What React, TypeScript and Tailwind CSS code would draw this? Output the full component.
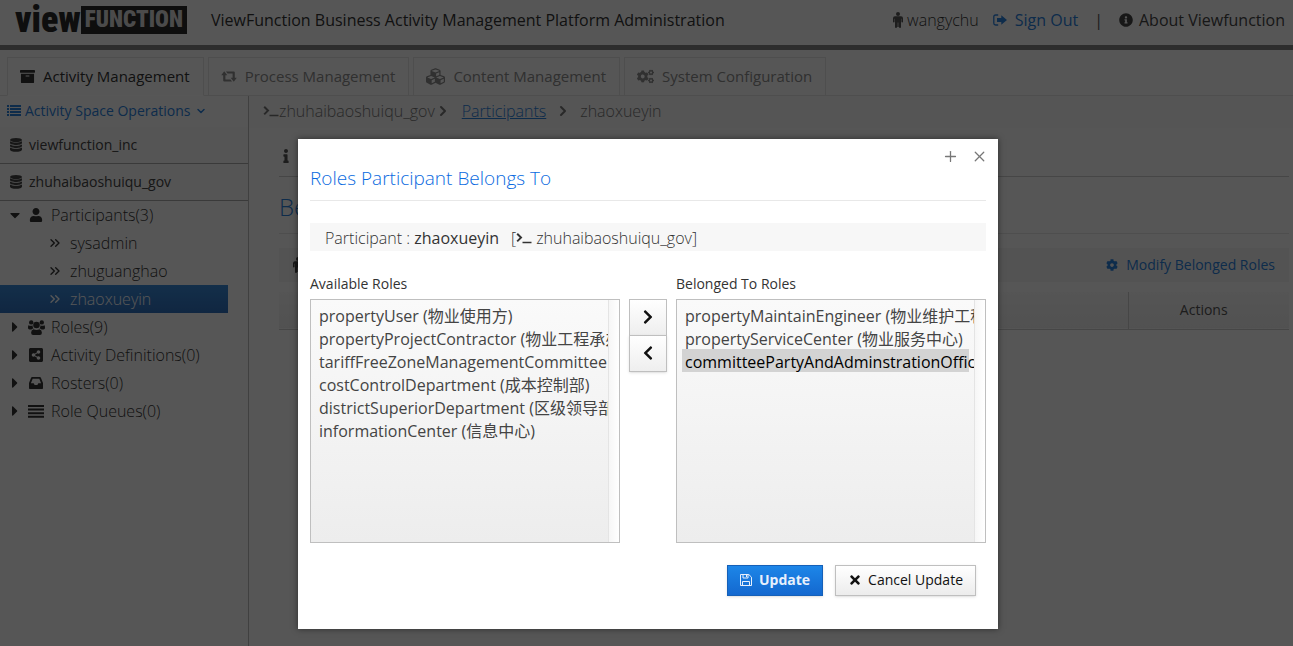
import React from "react";
import {
  FaArchive,
  FaCaretDown,
  FaCaretRight,
  FaChevronLeft,
  FaChevronRight,
  FaCog,
  FaCogs,
  FaCubes,
  FaInfo,
  FaInfoCircle,
  FaShareAltSquare,
  FaTimes,
  FaUser,
} from "react-icons/fa";
import { ChevronDown, ChevronRight, ChevronsRight, Plus, X } from "lucide-react";

type IconProps = { className?: string };

const SignOutIcon = () => (
  <svg viewBox="0 0 14 12" className="h-3 w-3.5" fill="none" aria-hidden="true">
    <path d="M5.2 1H2.6Q.8 1 .8 2.8v6.4Q.8 11 2.6 11h2.6" stroke="currentColor" strokeWidth="1.3" />
    <path d="M8.3 1.2 14 6l-5.700 4.800V8H4V4h4.300z" fill="currentColor" />
  </svg>
);

const FloppyIcon = () => (
  <svg viewBox="0 0 12 12" className="size-3" fill="none" stroke="currentColor" aria-hidden="true">
    <path d="M.5 .5h8.300l2.700 2.700v8.300H.5z" />
    <path d="M2.500 11.500V7.500h7v4M3 .5v3.500h5V.5M6.500 1v2" />
  </svg>
);

const PromptIcon = ({ className = "" }: IconProps) => (
  <svg viewBox="0 0 16 12" className={`h-3 w-4 shrink-0 ${className}`} fill="none" stroke="currentColor" strokeWidth="2" aria-hidden="true">
    <path d="M1.200 1.800 5 5.600 1.200 9.400" />
    <path d="M6.500 10.500h9" strokeWidth="1.500" />
  </svg>
);

const PersonIcon = ({ className = "" }: IconProps) => (
  <svg viewBox="0 0 10 16" className={`h-4 w-2.5 shrink-0 ${className}`} fill="currentColor" aria-hidden="true">
    <circle cx="5" cy="2" r="2" />
    <path d="M2 4.300h6a2 2 0 0 1 2 2v3.400a.8.8 0 0 1-1.600 0V6.800H8v8.100a1 1 0 0 1-2 0.100h-.7v-4.500h-.6V15h-.7a1 1 0 0 1-2-.1V6.800h-.4v2.900a.8.8 0 0 1-1.600 0V6.300a2 2 0 0 1 2-2z" />
  </svg>
);

const ListIcon = () => (
  <svg viewBox="0 0 14 11" className="h-[11px] w-3.5 shrink-0" fill="currentColor" aria-hidden="true">
    <path d="M0 0h2v2H0zM3 0h11v2H3zM0 3h2v2H0zM3 3h11v2H3zM0 6h2v2H0zM3 6h11v2H3zM0 9h2v2H0zM3 9h11v2H3z" />
  </svg>
);

const DatabaseIcon = () => (
  <svg viewBox="0 0 12 14" className="h-3.5 w-3 shrink-0" fill="currentColor" aria-hidden="true">
    <ellipse cx="6" cy="2" rx="6" ry="2" />
    <path d="M0 3.300c2.500 1.700 9.500 1.700 12 0v1.700c0 2.600-12 2.600-12 0zM0 6.400c2.500 1.700 9.500 1.700 12 0v1.600c0 2.600-12 2.600-12 0zM0 9.400c2.500 1.700 9.500 1.700 12 0v2.100c0 3.100-12 3.100-12 0z" />
  </svg>
);

const UsersIcon = () => (
  <svg viewBox="0 0 17 15" className="h-[15px] w-[17px]" fill="currentColor" aria-hidden="true">
    <circle cx="3.200" cy="2.400" r="2.200" />
    <circle cx="13.800" cy="2.400" r="2.200" />
    <circle cx="8.500" cy="5" r="3.300" />
    <path d="M.4 5.300q2.700 1 4.100 0 0 1.900 1 3.300-1.200 0-2 .9H1.500Q0 9.400 0 8 0 6 .4 5.300zM16.600 5.300q-2.700 1-4.100 0 0 1.900-1 3.300 1.200 0 2 .9h2q1.500-.1 1.500-1.500 0-2-.4-2.700zM5.500 9.200q3 1.600 6 0 2.400.6 2.400 3.600 0 2.200-2 2.200H5.100q-2 0-2-2.200 0-3 2.400-3.600z" />
  </svg>
);

const InboxIcon = () => (
  <svg viewBox="0 0 14 12" className="h-3 w-3.5" fill="currentColor" fillRule="evenodd" aria-hidden="true">
    <path d="M3.200 0h7.600q.7 0 1 .6L14 6v5.200q0 .8-.8.8H.8q-.8 0-.8-.8V6L2.200.6q.3-.6 1-.6zM3.700 1.800 1.900 6.300h2.800l.9 1.800h2.800l.9-1.800h2.800l-1.800-4.500z" />
  </svg>
);

const LinesIcon = () => (
  <svg viewBox="0 0 16 13" className="h-[13px] w-4" fill="currentColor" aria-hidden="true">
    <path d="M0 0h16v2H0zM0 3.600h16v2H0zM0 7.200h16v2H0zM0 10.800h16v2H0z" />
  </svg>
);

const RetweetIcon = () => (
  <svg viewBox="0 0 16 11" className="h-[11px] w-4" fill="currentColor" aria-hidden="true">
    <path d="M3.200 .3 6.300 4.200H4.400v4.300h5l1.700 2H3.200q-1 0-1-1V4.200H.2zM12.800 10.700 9.700 6.800h1.900V2.500h-5L4.900.5h7.900q1 0 1 1v5.300h2z" />
  </svg>
);

const ShareIcon = () => <FaShareAltSquare className="size-4" />;
const ArchiveIcon = () => <FaArchive className="size-[15px]" />;
const CubesIcon = () => <FaCubes className="size-[19px]" />;
const CogsIcon = () => <FaCogs className="size-[17px]" />;

const tabs = [
  { label: "Activity Management", icon: ArchiveIcon, active: true },
  { label: "Process Management", icon: RetweetIcon, active: false },
  { label: "Content Management", icon: CubesIcon, active: false },
  { label: "System Configuration", icon: CogsIcon, active: false },
];

const members = [
  { name: "sysadmin", selected: false },
  { name: "zhuguanghao", selected: false },
  { name: "zhaoxueyin", selected: true },
];

const groups = [
  { label: "Roles(9)", icon: UsersIcon },
  { label: "Activity Definitions(0)", icon: ShareIcon },
  { label: "Rosters(0)", icon: InboxIcon },
  { label: "Role Queues(0)", icon: LinesIcon },
];

const availableRoles = [
  "propertyUser (物业使用方)",
  "propertyProjectContractor (物业工程承办方)",
  "tariffFreeZoneManagementCommittee (保税区管委会)",
  "costControlDepartment (成本控制部)",
  "districtSuperiorDepartment (区级领导部门)",
  "informationCenter (信息中心)",
];

const belongedRoles = [
  "propertyMaintainEngineer (物业维护工程师)",
  "propertyServiceCenter (物业服务中心)",
  "committeePartyAndAdminstrationOffice (党政办)",
];

function Header() {
  return (
    <header className="flex h-[50px] items-center justify-between border-b-[5px] border-[#858585] pb-[5px] pl-[15px] pr-2">
      <div className="flex items-center">
        <div className="flex h-7 items-center font-['Noto_Sans_ExtraCondensed','Liberation_Sans_Narrow','Roboto_Condensed',sans-serif] font-black text-[#2a2a2a]">
          <span className="text-4xl leading-7">view</span>
          <span className="border-2 border-[#2a2a2a] bg-[#2a2a2a] px-0.5 text-[23px] leading-6 text-[#ddd]">FUNCTION</span>
        </div>
        <h1 className="ml-6 text-base text-[#333]">ViewFunction Business Activity Management Platform Administration</h1>
      </div>
      <div className="flex items-center text-base">
        <PersonIcon className="mr-1 text-[#555]" />
        <span className="font-light text-[#333]">wangychu</span>
        <a href="#sign-out" className="ml-3.5 flex items-center gap-2 text-[#2a80dc]"><SignOutIcon />Sign Out</a>
        <span className="mx-4 text-[#555]">|</span>
        <a href="#about" className="flex items-center gap-1.5 text-[#444]"><FaInfoCircle className="size-3.5" />About Viewfunction</a>
      </div>
    </header>
  );
}

function Tabs() {
  return (
    <nav className="flex gap-1 border-b border-[#e4e4e4] px-[7px] pt-[7px]">
      {tabs.map(({ label, icon: Icon, active }) => (
        <a
          key={label}
          href="#tab"
          className={`-mb-px flex h-[39px] items-center gap-2 border border-[#e4e4e4] pl-3 pr-[13px] text-[15px] ${active ? "border-b-white text-[#333]" : "text-[#8c8c8c]"}`}
        >
          <Icon />
          {label}
        </a>
      ))}
    </nav>
  );
}

function Sidebar() {
  return (
    <aside className="w-[249px] shrink-0 border-r border-[#bbb]">
      <a href="#operations" className="flex h-[31px] items-center gap-1 pb-0.5 pl-[7px] text-sm text-[#2a80dc]">
        <ListIcon />
        Activity Space Operations
        <ChevronDown className="size-3" strokeWidth={3} />
      </a>
      {["viewfunction_inc", "zhuhaibaoshuiqu_gov"].map((space) => (
        <a key={space} href="#space" className="flex h-[37px] items-center gap-[7px] border-b border-[#aaa] bg-[#f8f8f8] pl-2.5 text-sm text-[#444]">
          <DatabaseIcon />
          {space}
        </a>
      ))}
      <div className="text-base font-light text-[#333]">
        <a href="#participants" className="flex h-7 items-center pl-[7px]">
          <FaCaretDown className="mr-1.5 size-4" />
          <FaUser className="mr-2 size-3.5" />
          Participants(3)
        </a>
        {members.map((m) => (
          <a
            key={m.name}
            href="#member"
            className={`mr-5 flex h-7 items-center pl-[47px] ${m.selected ? "bg-linear-to-b from-[#3a8ad8] to-[#3070bd] text-white" : ""}`}
          >
            <ChevronsRight className="mr-[7px] size-4" strokeWidth={2} />
            {m.name}
          </a>
        ))}
        {groups.map(({ label, icon: Icon }) => (
          <a key={label} href="#group" className="flex h-7 items-center pl-[7px]">
            <FaCaretRight className="mr-1 size-4" />
            <span className="mr-1.5 flex w-[18px] justify-center"><Icon /></span>
            {label}
          </a>
        ))}
      </div>
    </aside>
  );
}

function Content() {
  return (
    <main className="min-w-0 grow">
      <nav className="flex h-8 items-center bg-[#f8f8f8] pb-0.5 pl-[14px] text-base font-light text-[#777]">
        <PromptIcon />
        <span>zhuhaibaoshuiqu_gov</span>
        <ChevronRight className="mr-[11px] size-4" strokeWidth={3} />
        <a href="#participants" className="text-[#2a80dc] underline">Participants</a>
        <ChevronRight className="mx-[9px] size-4" strokeWidth={3} />
        <span>zhaoxueyin</span>
      </nav>
      <div className="pl-[30px] pr-1">
        <div className="flex h-[49px] items-center border-b border-[#ccc] pt-2">
          <FaInfo className="size-3.5 text-[#555]" />
        </div>
        <h2 className="flex h-[57px] items-center border-b border-[#e4e4e4] pt-1 text-2xl font-light text-[#2a80dc]">Belonged To Roles</h2>
        <div className="mt-3.5 flex h-[34px] items-center justify-between bg-[#f4f4f4] pl-3.5 pr-3.5">
          <PersonIcon className="text-[#444]" />
          <a href="#modify" className="flex items-center gap-2 text-sm text-[#2a80dc]"><FaCog className="size-3" />Modify Belonged Roles</a>
        </div>
        <table className="mt-2.5 w-full table-fixed border-collapse text-sm text-[#555]">
          <thead>
            <tr className="h-[37px] border-b border-[#ccc] bg-linear-to-b from-[#f8f8f8] to-[#eee]">
              <th className="font-normal">Role Name</th>
              <th className="w-[161px] border-l border-[#ccc] pr-2.5 font-normal">Actions</th>
            </tr>
          </thead>
        </table>
      </div>
    </main>
  );
}

function RoleList({ id, label, roles, selected }: { id: string; label: string; roles: string[]; selected: string[] }) {
  return (
    <div className="min-w-0 flex-1">
      <label htmlFor={id} className="block h-[25px] text-sm leading-5 text-[#333]">{label}</label>
      <div className="flex h-[244px] border border-[#bfbfbf] bg-linear-to-b from-[#fafafa] to-[#ededed]">
        <select
          id={id}
          multiple
          defaultValue={selected}
          className="block min-w-0 flex-1 overflow-x-hidden overflow-y-auto bg-transparent px-[5px] py-[3px] text-base text-[#444] outline-none"
        >
          {roles.map((r) => (
            <option key={r} value={r} className="h-[23px] min-h-0 overflow-visible p-0 pl-[3px] checked:bg-[#d3d3d3] checked:bg-linear-to-b checked:from-[#d3d3d3] checked:to-[#d3d3d3] checked:text-black">
              {r}
            </option>
          ))}
        </select>
        <div className="w-[11px] border-l border-[#e4e4e4] bg-linear-to-r from-[#f6f6f6] to-white" />
      </div>
    </div>
  );
}

function RolesDialog() {
  const move = "flex h-[37px] w-[38px] items-center justify-center border border-[#bfbfbf] bg-linear-to-b from-white to-[#eee] pb-0.5 text-[#111]";
  return (
    <section role="dialog" aria-labelledby="dialog-title" className="w-[700px] bg-white px-3 pb-[33px] pt-2 shadow-[0_0_6px_rgba(0,0,0,0.5)]">
      <div className="flex h-[18px] items-center justify-end gap-3 text-[#777]">
        <button type="button" aria-label="Maximize"><Plus className="size-[17px]" strokeWidth={1.800} /></button>
        <button type="button" aria-label="Close" className="-mr-0.5"><X className="size-[17px]" strokeWidth={1.800} /></button>
      </div>
      <h2 id="dialog-title" className="h-9 border-b border-[#e8e8e8] text-[19px] leading-[26px] font-light text-[#0a6ae0]">Roles Participant Belongs To</h2>
      <p className="mt-[22px] flex h-7 items-center whitespace-pre bg-[#f7f7f7] pl-[15px] pt-0.5 text-base font-light text-[#333]">
        Participant : <b className="font-medium text-[#333]">zhaoxueyin</b>
        <span className="ml-3">[</span><PromptIcon className="mr-1" />zhuhaibaoshuiqu_gov]
      </p>
      <div className="mt-[23px] flex">
        <RoleList id="available" label="Available Roles" roles={availableRoles} selected={[]} />
        <div className="mx-[9px] mt-[25px] flex flex-col">
          <button type="button" aria-label="Add role" className={move}><FaChevronRight className="size-4" /></button>
          <button type="button" aria-label="Remove role" className={`${move} -mt-px shadow-sm`}><FaChevronLeft className="size-4" /></button>
        </div>
        <RoleList id="belonged" label="Belonged To Roles" roles={belongedRoles} selected={[belongedRoles[2]]} />
      </div>
      <div className="mt-[22px] flex justify-end gap-3 pr-2.5 text-sm">
        <button type="button" className="flex h-[31px] items-center gap-[7px] border border-[#1560b8] bg-linear-to-b from-[#1d86e8] to-[#1468cf] px-3 pb-0.5 font-bold text-[#e8f0fc] shadow-sm"><FloppyIcon />Update</button>
        <button type="button" className="flex h-[31px] items-center gap-1.5 border border-[#bfbfbf] bg-linear-to-b from-white to-[#ececec] px-3 pb-0.5 text-[#111] shadow-sm"><FaTimes className="size-3.5" />Cancel Update</button>
      </div>
    </section>
  );
}

export default function App() {
  return (
    <div className="relative flex min-h-screen flex-col overflow-hidden bg-[#fdfdfd] font-['Open_Sans','Noto_Sans_CJK_SC',sans-serif]">
      <Header />
      <Tabs />
      <div className="flex grow">
        <Sidebar />
        <Content />
      </div>
      <div className="absolute inset-0 flex items-start justify-center bg-black/66 pl-[3px] pt-[139px]">
        <RolesDialog />
      </div>
    </div>
  );
}
